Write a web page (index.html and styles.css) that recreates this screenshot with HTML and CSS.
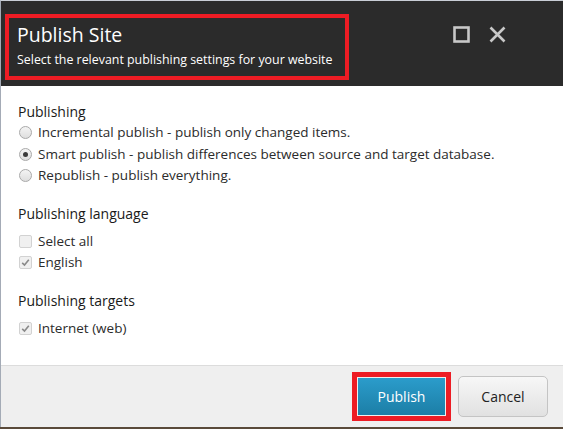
FILE: index.html
```html
<!DOCTYPE html>
<html>
<head>
<meta charset="utf-8">
<link rel="stylesheet" href="styles.css">
</head>
<body>
<div class="dialog">
  <header class="head">
    <div class="title-box">
      <div class="title">Publish Site</div>
      <div class="subtitle">Select the relevant publishing settings for your website</div>
    </div>
    <div class="win-btns">
      <svg class="ico" width="17" height="17" viewBox="0 0 17 17"><rect x="1.5" y="1.5" width="14" height="14" fill="none" stroke="#c8c8c8" stroke-width="2.6"/></svg>
      <svg class="ico" width="17" height="17" viewBox="0 0 17 17"><path d="M1.5 1.5 L15.5 15.5 M15.5 1.5 L1.5 15.5" stroke="#c8c8c8" stroke-width="2.6" fill="none"/></svg>
    </div>
  </header>
  <main class="body">
    <section class="group">
      <h3 class="group-title">Publishing</h3>
      <div class="opt"><span class="radio"></span>Incremental publish - publish only changed items.</div>
      <div class="opt"><span class="radio on"></span>Smart publish - publish differences between source and target database.</div>
      <div class="opt"><span class="radio"></span>Republish - publish everything.</div>
    </section>
    <section class="group">
      <h3 class="group-title">Publishing language</h3>
      <div class="checks">
        <div class="opt"><span class="check"></span>Select all</div>
        <div class="opt"><span class="check on"><svg width="9" height="9" viewBox="0 0 9 9"><path d="M1.2 4.8 L3.5 7 L7.8 1.8" fill="none" stroke="#8a8a8a" stroke-width="1.6"/></svg></span>English</div>
      </div>
    </section>
    <section class="group">
      <h3 class="group-title">Publishing targets</h3>
      <div class="checks">
        <div class="opt"><span class="check on"><svg width="9" height="9" viewBox="0 0 9 9"><path d="M1.2 4.8 L3.5 7 L7.8 1.8" fill="none" stroke="#8a8a8a" stroke-width="1.6"/></svg></span>Internet (web)</div>
      </div>
    </section>
  </main>
  <footer class="foot">
    <div class="hl"><button class="btn primary">Publish</button></div>
    <button class="btn">Cancel</button>
  </footer>
</div>
</body>
</html>
```

FILE: styles.css
```css
* { box-sizing: border-box; }
html, body { margin: 0; padding: 0; }
body {
  width: 563px;
  height: 429px;
  background: #5a4a3a;
  font-family: "Open Sans", "Liberation Sans", sans-serif;
  overflow: hidden;
}
.dialog {
  width: 563px;
  height: 427px;
  border-left: 1px solid #a4abb6;
  border-top: 1px solid #c9ced6;
  background: #fff;
  display: flex;
  flex-direction: column;
}
.head {
  height: 85px;
  background: #2b2b2b;
  display: flex;
  align-items: flex-start;
  justify-content: space-between;
  padding: 13px 0 0 4px;
}
.title-box {
  border: 4px solid #ed1c24;
  width: 344px;
  height: 66px;
  padding: 3px 0 0 8px;
  color: #fff;
  white-space: nowrap;
}
.title {
  font-size: 19.5px;
  line-height: 28px;
}
.subtitle {
  font-size: 12.4px;
  line-height: 20px;
  margin-top: 1px;
}
.win-btns {
  display: flex;
  gap: 19px;
  padding: 12px 57px 0 0;
}
.ico { display: block; }
.body {
  flex: 1;
  padding: 16px 17px 0 17px;
  color: #2b2b2b;
}
.group { margin-bottom: 17px; }
.group-title {
  margin: 0;
  font-size: 14px;
  font-weight: normal;
  line-height: 20px;
  color: #1a1a1a;
}
.checks { margin-top: 7px; }
.opt {
  display: flex;
  align-items: center;
  font-size: 13.5px;
  line-height: 21.5px;
  height: 21.5px;
  white-space: nowrap;
}
.radio {
  width: 13px;
  height: 13px;
  border-radius: 50%;
  border: 1px solid #a9a9a9;
  background: linear-gradient(#f4f4f4, #dedede);
  margin: 0 6px 0 1px;
  position: relative;
  flex: none;
}
.radio.on::after {
  content: "";
  position: absolute;
  left: 3px;
  top: 3px;
  width: 5px;
  height: 5px;
  border-radius: 50%;
  background: #3a3a3a;
}
.check {
  width: 13px;
  height: 13px;
  border-radius: 2px;
  border: 1px solid #d2d2d2;
  background: #f0f0f0;
  margin: 0 6px 0 1px;
  display: flex;
  align-items: center;
  justify-content: center;
  flex: none;
}
.foot {
  height: 62px;
  background: #efefef;
  border-top: 1px solid #dcdcdc;
  display: flex;
  align-items: center;
  justify-content: flex-end;
  padding: 0 15px 0 0;
  gap: 7px;
}
.hl {
  border: 5px solid #ed1c24;
  padding: 1px;
  background: #efefef;
}
.btn {
  font-family: "Open Sans", "Liberation Sans", sans-serif;
  font-size: 14px;
  height: 41px;
  width: 90px;
  border: 1px solid #c4c4c4;
  border-radius: 5px;
  background: linear-gradient(#f7f7f7, #e1e1e1);
  color: #222;
}
.btn.primary {
  height: 37px;
  width: 87px;
  border: none;
  border-radius: 0;
  background: linear-gradient(#2b9ccb, #1c7ea6);
  color: #fff;
  display: block;
}
```
